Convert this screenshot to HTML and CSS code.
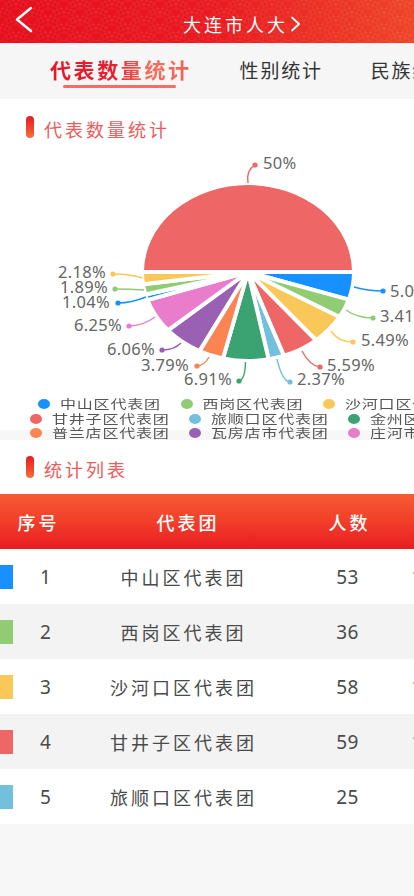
FILE: index.html
```html
<!DOCTYPE html>
<html lang="zh-CN">
<head>
<meta charset="utf-8">
<meta name="viewport" content="width=device-width, initial-scale=1">
<title>大连市人大</title>
<link rel="stylesheet" href="styles.css">
</head>
<body>
<div class="page">
  <header class="topbar">
    <svg class="back" width="20" height="27" viewBox="0 0 20 27"><polyline points="17,2 3,13.5 17,25" /></svg>
    <div class="title"><span>大连市人大</span><svg class="chev" width="11" height="16" viewBox="0 0 11 16"><polyline points="2,1.5 9,8 2,14.5" /></svg></div>
  </header>

  <nav class="tabs">
    <div class="tab active"><span class="tab-text">代表数量统计</span><i class="tab-line"></i></div>
    <div class="tab"><span class="tab-text">性别统计</span></div>
    <div class="tab"><span class="tab-text">民族统计</span></div>
  </nav>

  <section class="card chart-card">
    <h2 class="sec-title"><i class="bar"></i><span>代表数量统计</span></h2>
    <svg class="pie" width="414" height="255" viewBox="0 140 414 255">
      <g stroke="#fff" stroke-width="4" stroke-linejoin="round">
        <path fill="#ee6666" d="M248 272 L142 272 A106 89 0 0 1 354 272 Z"/>
        <path fill="#1890ff" d="M248 272 L354 272 A106 89 0 0 1 348.78 299.6 Z"/>
        <path fill="#91cc75" d="M248 272 L348.78 299.6 A106 89 0 0 1 339.48 316.96 Z"/>
        <path fill="#fac858" d="M248 272 L339.48 316.96 A106 89 0 0 1 315.99 340.28 Z"/>
        <path fill="#ee6666" d="M248 272 L315.99 340.28 A106 89 0 0 1 283.84 355.76 Z"/>
        <path fill="#73c0de" d="M248 272 L283.84 355.76 A106 89 0 0 1 268.64 359.3 Z"/>
        <path fill="#3ba272" d="M248 272 L268.64 359.3 A106 89 0 0 1 222.98 358.49 Z"/>
        <path fill="#fc8452" d="M248 272 L222.98 358.49 A106 89 0 0 1 199.4 351.09 Z"/>
        <path fill="#9a60b4" d="M248 272 L199.4 351.09 A106 89 0 0 1 167.87 330.27 Z"/>
        <path fill="#ea7ccc" d="M248 272 L167.87 330.27 A106 89 0 0 1 147.42 300.08 Z"/>
        <path fill="#1890ff" d="M248 272 L147.42 300.08 A106 89 0 0 1 145.44 294.51 Z"/>
        <path fill="#91cc75" d="M248 272 L145.44 294.51 A106 89 0 0 1 143 284.16 Z"/>
        <path fill="#fac858" d="M248 272 L143 284.16 A106 89 0 0 1 142 272 Z"/>
      </g>
      <g fill="none" stroke-width="1.4">
        <path stroke="#ee6666" d="M248 183 Q246 170 255 165"/>
        <path stroke="#1890ff" d="M354 287 Q368 291 383 291"/>
        <path stroke="#91cc75" d="M346 310 Q357 318 373 318"/>
        <path stroke="#fac858" d="M331 331 Q338 342 353 342"/>
        <path stroke="#ee6666" d="M302 351 Q310 366 320 367"/>
        <path stroke="#73c0de" d="M277 359 Q282 381 290 382"/>
        <path stroke="#3ba272" d="M245.5 362 Q245 380 239 381"/>
        <path stroke="#fc8452" d="M209 357 Q204 366 197 366"/>
        <path stroke="#9a60b4" d="M181 343 Q174 350 162 350"/>
        <path stroke="#ea7ccc" d="M155 317 Q143 326 129 326"/>
        <path stroke="#1890ff" d="M146 297 Q131 303 118 303"/>
        <path stroke="#91cc75" d="M144 290 Q130 289 115 289"/>
        <path stroke="#fac858" d="M142.5 278 Q130 274 113 274"/>
      </g>
      <g>
        <circle cx="255" cy="165" r="2.6" fill="#ee6666"/>
        <circle cx="383" cy="291" r="2.6" fill="#1890ff"/>
        <circle cx="373" cy="318" r="2.6" fill="#91cc75"/>
        <circle cx="353" cy="342" r="2.6" fill="#fac858"/>
        <circle cx="320" cy="367" r="2.6" fill="#ee6666"/>
        <circle cx="290" cy="382" r="2.6" fill="#73c0de"/>
        <circle cx="239" cy="381" r="2.6" fill="#3ba272"/>
        <circle cx="197" cy="366" r="2.6" fill="#fc8452"/>
        <circle cx="162" cy="350" r="2.6" fill="#9a60b4"/>
        <circle cx="129" cy="326" r="2.6" fill="#ea7ccc"/>
        <circle cx="118" cy="303" r="2.6" fill="#1890ff"/>
        <circle cx="115" cy="289" r="2.6" fill="#91cc75"/>
        <circle cx="113" cy="274" r="2.6" fill="#fac858"/>
      </g>
      <g class="pie-labels">
        <text x="263" y="169">50%</text>
        <text x="390" y="297">5.02%</text>
        <text x="380" y="322">3.41%</text>
        <text x="361" y="346">5.49%</text>
        <text x="327" y="371">5.59%</text>
        <text x="297" y="385">2.37%</text>
        <text class="end" x="232" y="385">6.91%</text>
        <text class="end" x="189" y="371">3.79%</text>
        <text class="end" x="155" y="355">6.06%</text>
        <text class="end" x="122" y="331">6.25%</text>
        <text class="end" x="110" y="308">1.04%</text>
        <text class="end" x="108" y="293">1.89%</text>
        <text class="end" x="106" y="278">2.18%</text>
      </g>
    </svg>
    <div class="legend">
      <div class="lg-row r1">
        <div class="lg-item"><i class="dot c-blue"></i><span class="lg-text">中山区代表团</span></div>
        <div class="lg-item"><i class="dot c-green"></i><span class="lg-text">西岗区代表团</span></div>
        <div class="lg-item"><i class="dot c-yellow"></i><span class="lg-text">沙河口区代表团</span></div>
      </div>
      <div class="lg-row r2">
        <div class="lg-item"><i class="dot c-red"></i><span class="lg-text">甘井子区代表团</span></div>
        <div class="lg-item"><i class="dot c-lblue"></i><span class="lg-text">旅顺口区代表团</span></div>
        <div class="lg-item"><i class="dot c-dgreen"></i><span class="lg-text">金州区代表团</span></div>
      </div>
      <div class="lg-row r3">
        <div class="lg-item"><i class="dot c-orange"></i><span class="lg-text">普兰店区代表团</span></div>
        <div class="lg-item"><i class="dot c-purple"></i><span class="lg-text">瓦房店市代表团</span></div>
        <div class="lg-item"><i class="dot c-pink"></i><span class="lg-text">庄河市代表团</span></div>
      </div>
    </div>
  </section>

  <section class="card list-card">
    <h2 class="sec-title"><i class="bar"></i><span>统计列表</span></h2>
  </section>

  <div class="table">
    <div class="thead">
      <div class="th th1">序号</div>
      <div class="th th2">代表团</div>
      <div class="th th3">人数</div>
    </div>
    <div class="tr">
      <i class="sw c-blue"></i><div class="td c-no">1</div><div class="td c-name">中山区代表团</div><div class="td c-cnt">53</div><div class="td c-ext">1</div>
    </div>
    <div class="tr alt">
      <i class="sw c-green"></i><div class="td c-no">2</div><div class="td c-name">西岗区代表团</div><div class="td c-cnt">36</div><div class="td c-ext"></div>
    </div>
    <div class="tr">
      <i class="sw c-yellow"></i><div class="td c-no">3</div><div class="td c-name">沙河口区代表团</div><div class="td c-cnt">58</div><div class="td c-ext">1</div>
    </div>
    <div class="tr alt">
      <i class="sw c-red"></i><div class="td c-no">4</div><div class="td c-name">甘井子区代表团</div><div class="td c-cnt">59</div><div class="td c-ext">1</div>
    </div>
    <div class="tr">
      <i class="sw c-lblue"></i><div class="td c-no">5</div><div class="td c-name">旅顺口区代表团</div><div class="td c-cnt">25</div><div class="td c-ext"></div>
    </div>
  </div>
</div>
</body>
</html>
```

FILE: styles.css
```css
* { box-sizing: border-box; }
html, body { margin: 0; padding: 0; overflow-x: hidden; }
body {
  background: #f7f7f7;
  font-family: "Noto Sans CJK SC", "Noto Sans", sans-serif;
  color: #444;
}
.page { width: 414px; min-height: 896px; overflow: hidden; }

/* top bar */
.topbar {
  height: 44px;
  display: flex;
  align-items: flex-start;
  background:
    radial-gradient(circle at 50% 100%, transparent 0 7px, rgba(255,255,255,.06) 7px 8px, transparent 8px 11px, rgba(255,255,255,.06) 11px 12px, transparent 12px 15px, rgba(255,255,255,.05) 15px 16px, transparent 16px) 0 0 / 32px 16px,
    radial-gradient(circle at 50% 100%, transparent 0 7px, rgba(255,255,255,.06) 7px 8px, transparent 8px 11px, rgba(255,255,255,.06) 11px 12px, transparent 12px 15px, rgba(255,255,255,.05) 15px 16px, transparent 16px) 16px 8px / 32px 16px,
    linear-gradient(90deg, #e60f1d 0%, #e91a21 50%, #ee4528 100%);
  border-bottom: 1px solid #fbeaea;
}
.back { margin: 6px 0 0 14px; flex: none; }
.back polyline, .chev polyline {
  fill: none; stroke: #fff; stroke-width: 2.4; stroke-linecap: round; stroke-linejoin: round;
}
.chev polyline { stroke-width: 1.8; }
.title {
  margin: 0 0 0 149px;
  height: 44px;
  padding-top: 3px;
  display: flex;
  align-items: center;
  color: #fff;
  font-size: 18px;
  letter-spacing: 3px;
}
.chev { margin-left: 2px; margin-top: 1px; }

/* tabs */
.tabs {
  height: 55px;
  background: #f6f6f6;
  display: flex;
  gap: 48px;
  padding-left: 50px;
  white-space: nowrap;
  overflow: hidden;
}
.tab {
  flex: none;
  display: flex;
  flex-direction: column;
  padding-top: 13px;
}
.tab-text {
  line-height: 25px;
  font-size: 19px;
  letter-spacing: 1.8px;
  color: #333;
}
.tab.active .tab-text {
  font-size: 21px;
  letter-spacing: 2.6px;
  font-weight: 700;
  background: linear-gradient(90deg, #e8172a 0%, #e8202e 45%, #f4705f 70%, #f2604e 100%);
  -webkit-background-clip: text;
  background-clip: text;
  color: transparent;
}
.tab-line {
  align-self: center;
  width: 113px;
  height: 2.5px;
  margin-top: 3px;
  margin-left: -2px;
  background: #f36e66;
  border-radius: 2px;
}

/* cards */
.card { background: #fff; }
.chart-card { height: 331px; }
.list-card { margin-top: 10px; padding: 16px 0 16px 0; }
.sec-title {
  margin: 0;
  display: flex;
  align-items: center;
  height: 22px;
  padding-left: 26px;
  font-weight: 400;
}
.chart-card .sec-title { margin-top: 17px; display: flex; }
.chart-card { padding-top: 17px; }
.chart-card .sec-title { margin-top: 0; }
.bar {
  width: 8px; height: 22px;
  border-radius: 4px;
  background: linear-gradient(180deg, #e61c24 0%, #f04a2e 60%, #f7703c 100%);
  flex: none;
}
.sec-title span {
  margin-left: 10px;
  font-size: 18px;
  letter-spacing: 3px;
  color: #ef5a5a;
  line-height: 22px;
  padding-top: 3px;
}

/* pie */
.pie { display: block; margin-top: 2px; overflow: hidden; }
.pie-labels text {
  font-family: "Noto Sans", "Liberation Sans", sans-serif;
  font-size: 16.5px;
  fill: #666;
  letter-spacing: 0.3px;
}
.pie-labels text.end { text-anchor: end; }

/* legend */
.legend { margin-top: 2px; }
.lg-row {
  display: flex;
  align-items: center;
  height: 14.5px;
  white-space: nowrap;
}
.r1 { padding-left: 38px; }
.r1 .lg-item { width: 142.5px; }
.r2, .r3 { padding-left: 30px; }
.r2 .lg-item, .r3 .lg-item { width: 159px; }
.lg-item { flex: none; display: flex; align-items: center; }
.dot {
  width: 12px; height: 10px;
  border-radius: 50%;
  margin-right: 10px;
  flex: none;
}
.lg-text {
  display: inline-block;
  font-size: 16px;
  line-height: 16px;
  letter-spacing: 0.8px;
  color: #555;
  transform: scaleY(0.76);
}

.c-blue { background: #1890ff; }
.c-green { background: #91cc75; }
.c-yellow { background: #fac858; }
.c-red { background: #ee6666; }
.c-lblue { background: #73c0de; }
.c-dgreen { background: #3ba272; }
.c-orange { background: #fc8452; }
.c-purple { background: #9a60b4; }
.c-pink { background: #ea7ccc; }

/* table */
.table { width: 414px; overflow: hidden; }
.thead {
  height: 55px;
  display: flex;
  align-items: center;
  background: linear-gradient(180deg, #f65c34 0%, #f23e2a 50%, #e81c22 100%);
  color: #fff;
}
.th {
  flex: none;
  text-align: center;
  font-size: 18px;
  letter-spacing: 3px;
  font-weight: 500;
  padding-left: 3px;
}
.th1 { width: 74px; }
.th2 { width: 225px; }
.th3 { width: 98px; }

.tr {
  height: 55px;
  display: flex;
  align-items: center;
  background: #fff;
  width: 460px;
}
.tr.alt { background: #f3f3f3; }
.sw { width: 13px; height: 24px; flex: none; }
.td { flex: none; text-align: center; color: #4a4a4a; }
.c-no { width: 65px; font-size: 19px; font-family: "Noto Sans", sans-serif; }
.c-name { width: 208px; font-size: 18px; letter-spacing: 3px; padding-left: 3px; }
.c-cnt { width: 123px; font-size: 19px; font-family: "Noto Sans", sans-serif; letter-spacing: 0.5px; }
.c-ext { width: 40px; text-align: left; padding-left: 2px; font-size: 19px; color: #999; font-family: "Noto Sans", sans-serif; }
.tr .c-no, .tr .c-cnt { background: none; }
```
